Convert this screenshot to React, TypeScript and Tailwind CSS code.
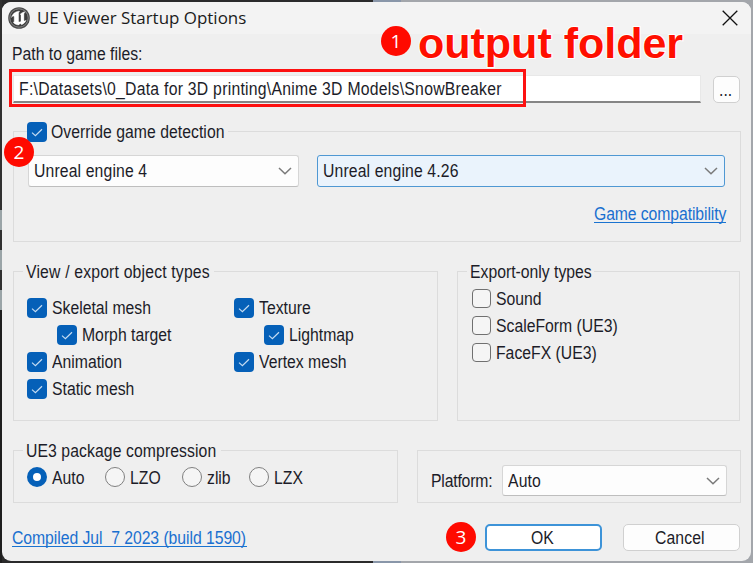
import type { ReactNode } from "react";

/** Condensed dialog label. */
function Label({ children, className = "" }: { children: ReactNode; className?: string }) {
  return (
    <span
      className={`inline-block origin-left scale-x-[0.9] whitespace-pre text-[17.5px] leading-5 ${className}`}
    >
      {children}
    </span>
  );
}

function CheckBox({ checked = false }: { checked?: boolean }) {
  if (!checked) {
    return <span className="size-[19px] shrink-0 rounded-[4px] border-[1.5px] border-[#707070] bg-[#f5f5f5]" />;
  }
  return (
    <span className="flex size-5 shrink-0 items-center justify-center rounded-[4px] bg-[#0560b8]">
      <svg viewBox="0 0 20 20" className="size-5" fill="none" stroke="#c5dcf2" strokeWidth="1.2">
        <path d="M5 10.600 8.400 13.600 15 7.200" />
      </svg>
    </span>
  );
}

function CheckRow({ label, checked, className = "" }: { label: string; checked?: boolean; className?: string }) {
  return (
    <div className={`flex h-[27px] items-center gap-[5px] ${className}`}>
      <CheckBox checked={checked} />
      <Label>{label}</Label>
    </div>
  );
}

function Radio({ label, checked = false, className }: { label: string; checked?: boolean; className: string }) {
  return (
    <div className={`flex items-center gap-[5px] ${className}`}>
      {checked ? (
        <span className="size-5 shrink-0 rounded-full border-[6px] border-[#0560b8] bg-white" />
      ) : (
        <span className="size-5 shrink-0 rounded-full border-[1.5px] border-[#808080] bg-[#f5f5f5]" />
      )}
      <Label className="translate-y-px">{label}</Label>
    </div>
  );
}

function Select({ value, className }: { value: string; className: string }) {
  return (
    <div className={`flex items-center justify-between rounded-[3px] border pl-[5px] pr-[6px] ${className}`}>
      <Label className="tracking-[0.15px]">{value}</Label>
      <svg viewBox="0 0 14 8" className="h-2 w-3.5 shrink-0" fill="none" stroke="#7a7a7a" strokeWidth="1.5">
        <path d="M1 1 7 6.800 13 1" />
      </svg>
    </div>
  );
}

function Group({ children, className }: { children: ReactNode; className: string }) {
  return <section className={`border border-[#dcdcdc] ${className}`}>{children}</section>;
}

function Legend({ children, className }: { children: ReactNode; className: string }) {
  return <div className={`-mt-[11px] ml-[9px] h-5 bg-[#efefef] pl-[3px] ${className}`}>{children}</div>;
}

function Badge({ n, className }: { n: number; className: string }) {
  return (
    <div
      className={`absolute flex size-[30px] items-center justify-center rounded-full bg-[#ff0a00] font-['Open_Sans','Noto_Sans',sans-serif] text-[19px] leading-none text-white ${className}`}
    >
      {n}
    </div>
  );
}

function UnrealLogo() {
  return (
    <svg viewBox="0 0 22 22" className="size-[22px]">
      <circle cx="11" cy="11" r="10.800" fill="#4a4a4a" />
      <circle cx="11" cy="11" r="9.200" fill="#3c3c3c" stroke="#858585" strokeWidth="1" />
      <path
        d="M10.200 4.200C7 4.800 4.200 7 3.400 10.500c.9-1 1.600-1.500 2.100-1.400.5 0 .7.300.7.900v4.300c0 .7-.3 1-1 .9 1.200 1.700 3.200 2.700 5.500 2.800l1.500-1.500 1.400 1.200c2.100-.9 3.800-2.500 4.500-4.500-.7.600-1.200.9-1.600.8-.4 0-.6-.300-.6-.8V7.100c0-.9.6-1.700 1.400-2.300-2 .2-3.600 1-5 2.300l.7 1.100v6c-.400.500-.8.800-1.400.8s-1-.400-1-1V6.600c0-.9.4-1.700 1-2.300z"
        fill="#fff"
        stroke="#fff"
        strokeWidth=".4"
      />
    </svg>
  );
}

export default function App() {
  return (
    <div className="relative flex h-[563px] w-[753px] overflow-hidden bg-[linear-gradient(to_right,#2a2a2b_0_373px,#8996a9_373px_401px,#a3a6ab_401px)] font-['Liberation_Sans',Arial,sans-serif] text-[#1c1c28]">
      <div className="flex w-0.5 shrink-0 flex-col">
        <div className="h-[210px] bg-[#303030]" />
        <div className="h-5 bg-[#9aa4a7]" />
        <div className="h-5 bg-[#303030]" />
        <div className="h-5 bg-[#9aa4a7]" />
        <div className="h-5 bg-[#303030]" />
        <div className="h-5 bg-[#9aa4a7]" />
        <div className="flex-1 bg-[#1e1e1e]" />
      </div>

      <main className="my-0.5 h-[559px] w-[749px] rounded-[9px] bg-[#efefef]">
        <header className="flex h-8 items-center rounded-t-[9px] bg-[#f3f3f3] pl-[6px] pr-[13px]">
          <UnrealLogo />
          <span className="ml-[7px] inline-block origin-left scale-x-[0.996] whitespace-nowrap font-['Open_Sans','Noto_Sans',sans-serif] text-[17px] leading-5 text-[#1b1b1b]">
            UE Viewer Startup Options
          </span>
          <svg viewBox="0 0 16 16" className="ml-auto size-4" stroke="#111" strokeWidth="1.3">
            <path d="M.7.7 15.300 15.300M15.300.7.7 15.300" />
          </svg>
        </header>

        <div className="flex h-[41px] items-center pl-[10px]">
          <Label className="-translate-y-px">Path to game files:</Label>
        </div>

        <div className="flex h-7 items-center pl-[11px]">
          <div className="flex h-7 w-[688px] items-center border border-b-2 border-[#e8e8e8] border-b-[#858585] bg-white pl-[5px]">
            <Label className="tracking-[0.29px]">
              {"F:\\Datasets\\0_Data for 3D printing\\Anime 3D Models\\SnowBreaker"}
            </Label>
          </div>
          <div className="ml-3 flex h-[27px] w-[27px] justify-center rounded-[5px] border border-[#d0d0d0] bg-[#fdfdfd] pt-[3px]">
            <Label className="origin-center">...</Label>
          </div>
        </div>

        <Group className="ml-[11px] mt-7 h-[111px] w-[728px]">
          <div className="-mt-2.5 ml-[13px] flex h-5 w-[201px] items-center gap-1 bg-[#efefef]">
            <CheckBox checked />
            <Label className="tracking-[0.05px]">Override game detection</Label>
          </div>
          <div className="ml-[14px] mt-[13px] flex gap-[18px]">
            <Select value="Unreal engine 4" className="h-8 w-[271px] border-[#d6d6d6] border-b-[#bebebe] bg-[#fdfdfd]" />
            <Select value="Unreal engine 4.26" className="h-8 w-[408px] border-[#4f98d3] bg-[#eaf3fc]" />
          </div>
          <div className="ml-[580px] mt-4 h-[20px] w-[132px] border-b-[1.5px] border-[#1a73d0] text-[#1a6fd0]">
            <Label className="tracking-[-0.1px]">Game compatibility</Label>
          </div>
        </Group>

        <div className="ml-[11px] mt-[29px] flex gap-[19px]">
          <Group className="h-[150px] w-[425px]">
            <Legend className="w-[191px]">
              <Label className="tracking-[0.2px]">View / export object types</Label>
            </Legend>
            <div className="ml-[13px] mt-[13px] flex">
              <div className="w-[207px]">
                <CheckRow checked label="Skeletal mesh" />
                <CheckRow checked label="Morph target" className="ml-[30px]" />
                <CheckRow checked label="Animation" />
                <CheckRow checked label="Static mesh" />
              </div>
              <div>
                <CheckRow checked label="Texture" />
                <CheckRow checked label="Lightmap" className="ml-[30px]" />
                <CheckRow checked label="Vertex mesh" />
              </div>
            </div>
          </Group>
          <Group className="h-[150px] w-[283px]">
            <Legend className="w-[127px]">
              <Label>Export-only types</Label>
            </Legend>
            <div className="ml-[14px] mt-1">
              <CheckRow label="Sound" />
              <CheckRow label="ScaleForm (UE3)" />
              <CheckRow label="FaceFX (UE3)" />
            </div>
          </Group>
        </div>

        <div className="ml-[11px] mt-[29px] flex gap-[19px]">
          <Group className="h-[53px] w-[385px]">
            <Legend className="w-[198px]">
              <Label className="tracking-[0.1px]">UE3 package compression</Label>
            </Legend>
            <div className="ml-[13px] mt-[7px] flex">
              <Radio checked label="Auto" className="w-[78px]" />
              <Radio label="LZO" className="w-[77px]" />
              <Radio label="zlib" className="w-[67px]" />
              <Radio label="LZX" className="w-[70px]" />
            </div>
          </Group>
          <Group className="flex h-[53px] w-[324px] items-start pl-[13px]">
            <div className="w-[71px] pt-[19px]">
              <Label className="tracking-[-0.2px]">Platform:</Label>
            </div>
            <Select value="Auto" className="mt-[14px] h-[31px] w-[225px] border-[#d6d6d6] border-b-[#bebebe] bg-[#fdfdfd]" />
          </Group>
        </div>

        <footer className="mt-[21px] flex h-[27px] pl-[10px]">
          <div className="mt-[3px] h-5 w-[235px] border-b-[1.5px] border-[#1a73d0] text-[#1a6fd0]">
            <Label className="tracking-[-0.05px]">{"Compiled Jul  7 2023 (build 1590)"}</Label>
          </div>
          <button className="ml-[238px] flex h-[27px] w-[117px] items-center justify-center rounded-[5px] border-2 border-[#3d93d8] bg-white">
            <Label className="origin-center">OK</Label>
          </button>
          <button className="ml-[21px] flex h-[27px] w-[117px] items-center justify-center rounded-[5px] border border-[#d0d0d0] bg-[#fdfdfd] pl-0.5">
            <Label className="origin-center tracking-[0.1px]">Cancel</Label>
          </button>
        </footer>
      </main>

      <div className="absolute left-[9px] top-[69px] h-[38px] w-[517px] border-[3px] border-[#fd1111]" />
      <div className="absolute left-[418px] top-[18px] whitespace-nowrap text-[43px] font-bold leading-[50px] text-[#ff0f00] [paint-order:stroke_fill] [-webkit-text-stroke:2px_white]">
        output folder
      </div>
      <Badge n={1} className="left-[381px] top-[26px]" />
      <Badge n={2} className="left-[4px] top-[137px]" />
      <Badge n={3} className="left-[446px] top-[522px]" />
    </div>
  );
}
